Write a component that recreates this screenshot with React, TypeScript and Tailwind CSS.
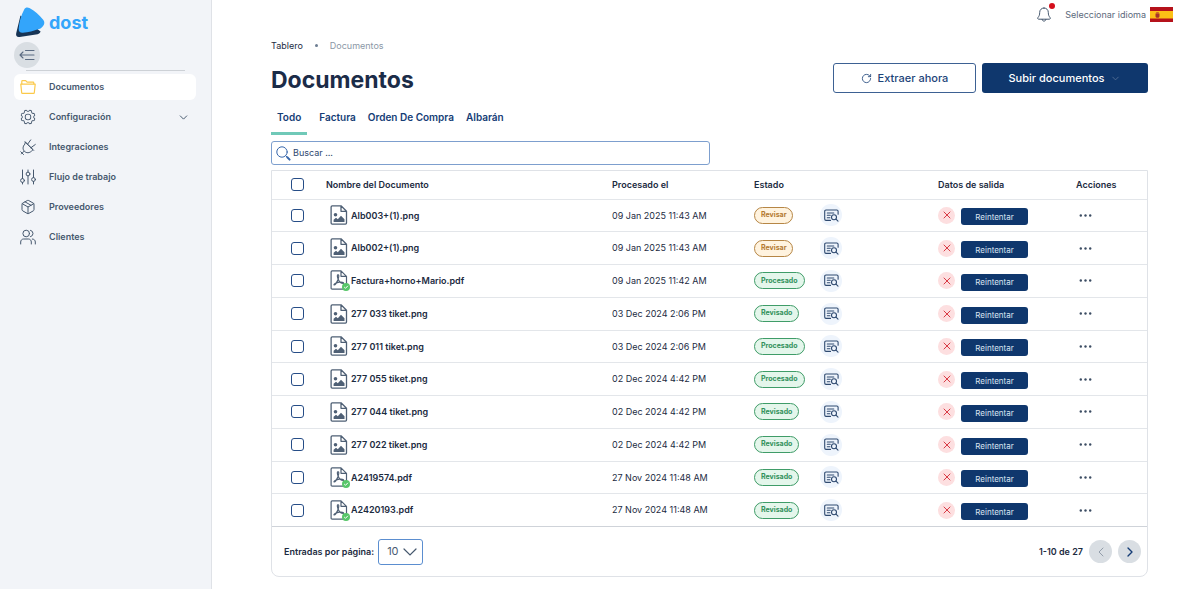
import React, { useState } from "react";
import { ChevronDown, ChevronLeft, ChevronRight, Package, RotateCw, X } from "lucide-react";
import { PiGearLight } from "react-icons/pi";

type Status = "Revisar" | "Procesado" | "Revisado";

interface DocumentRow {
  name: string;
  date: string;
  status: Status;
}

const documents: DocumentRow[] = [
  { name: "Alb003+(1).png", date: "09 Jan 2025 11:43 AM", status: "Revisar" },
  { name: "Alb002+(1).png", date: "09 Jan 2025 11:43 AM", status: "Revisar" },
  { name: "Factura+horno+Mario.pdf", date: "09 Jan 2025 11:42 AM", status: "Procesado" },
  { name: "277 033 tiket.png", date: "03 Dec 2024 2:06 PM", status: "Revisado" },
  { name: "277 011 tiket.png", date: "03 Dec 2024 2:06 PM", status: "Procesado" },
  { name: "277 055 tiket.png", date: "02 Dec 2024 4:42 PM", status: "Procesado" },
  { name: "277 044 tiket.png", date: "02 Dec 2024 4:42 PM", status: "Revisado" },
  { name: "277 022 tiket.png", date: "02 Dec 2024 4:42 PM", status: "Revisado" },
  { name: "A2419574.pdf", date: "27 Nov 2024 11:48 AM", status: "Revisado" },
  { name: "A2420193.pdf", date: "27 Nov 2024 11:48 AM", status: "Revisado" },
];

const tabs = ["Todo", "Factura", "Orden De Compra", "Albarán"];

const checkboxClass =
  "block w-[13px] h-[13px] ml-[19px] appearance-none rounded-[3px] border border-[#264d87] bg-white checked:bg-[#0f376d]";

/* Icons */

const FolderIcon = () => (
  <svg viewBox="0 0 16 16" className="w-4 h-4" fill="none" stroke="#fbc94a" strokeWidth="1.2" strokeLinejoin="round">
    <path d="M1.8 5.2V2.4c0-.4.3-.7.7-.7h3.2l1.4 1.5h6c.4 0 .7.3.7.7v1.3" />
    <path d="M.8 5.2h14.4l-.9 8.5c0 .4-.4.7-.8.7h-11c-.4 0-.8-.3-.8-.7z" />
  </svg>
);

const PlugIcon = () => (
  <svg viewBox="0 0 16 16" className="w-4 h-4" fill="none" stroke="currentColor" strokeWidth="1" strokeLinecap="round" strokeLinejoin="round">
    <path d="M5.6 3.3l7.4 7.4-1.5 1.4c-2 2-5 2.200-7 .3s-1.900-5 .1-7z" />
    <path d="M5 2.700l8.700 8.700M7.600 5.200L10.700.9M11 8.700l4.300-3.200M4.200 12.100L1.400 14.900M.8 12.800l2.700 2.700" />
  </svg>
);

const FlowIcon = () => (
  <svg viewBox="0 0 16 16" className="w-4 h-4" fill="none" stroke="currentColor" strokeWidth="1" strokeLinecap="round">
    <path d="M2.500 1v8.500M2.500 13.500V15M8 1v2M8 7v8M13.500 1v7.500M13.500 12.500V15" />
    <circle cx="2.500" cy="11.500" r="1.900" />
    <circle cx="8" cy="5" r="1.900" />
    <circle cx="13.500" cy="10.500" r="1.900" />
  </svg>
);

const ClientsIcon = () => (
  <svg viewBox="0 0 16 16" className="w-4 h-4" fill="none" stroke="currentColor" strokeWidth="1" strokeLinecap="round">
    <circle cx="6.200" cy="4.500" r="3.300" />
    <path d="M.7 15v-2c0-1.700 1.200-3 2.900-3h4.800c1.700 0 2.900 1.300 2.900 3v2M10.500 1.300a3.300 3.300 0 0 1 0 6.400M12.300 10c1.800 0 3 1.300 3 3v2" />
  </svg>
);

const Logo = () => (
  <svg viewBox="0 0 30 31" className="w-[30px] h-[31px]">
    <path d="M5.500 8.500L1.200 26.200c-.6 2.700.8 4.200 3.400 3.800l18-2.800c1.600-.3 2.300-1.200 3-2.600l-12-9z" fill="#173455" />
    <path d="M9.200 2.400c1.100-1.900 3.200-2.400 5.200-1.300 5.100 2.800 9.800 6.800 13.800 11.700 1.600 2 1.500 4.300-.1 6.100-1.200 1.400-2.500 2.600-4.200 3.200-5.200 2-10.500 3.200-16.100 3.700-2.700.2-4.300-1.500-4.100-4.100.5-6.700 2.100-13.200 5.500-19.300z" fill="#33a5fb" />
  </svg>
);

const CollapseIcon = () => (
  <svg viewBox="0 0 16 12" className="w-4 h-3" fill="none" stroke="#5b6b82" strokeWidth="1.100" strokeLinecap="round" strokeLinejoin="round">
    <path d="M6.500 1.500H15M1 6h14M6.500 10.500H15M4 3L1 6l3 3" />
  </svg>
);

const BellIcon = () => (
  <svg viewBox="0 0 14 15" className="w-[14px] h-[15px]" fill="none" stroke="#46586e" strokeWidth="1" strokeLinecap="round" strokeLinejoin="round">
    <path d="M7 1C4.400 1 2.700 2.900 2.700 5.400c0 2.600-.6 3.700-1.600 4.900-.8 1-.4 1.900.6 1.900h10.600c1 0 1.400-.9.6-1.900-1-1.200-1.600-2.300-1.600-4.900C11.300 2.900 9.600 1 7 1zM5.100 12.400c.2 1.100.9 1.700 1.900 1.700s1.700-.6 1.900-1.700" />
  </svg>
);

const SpainFlag = () => (
  <svg viewBox="0 0 23 15" className="w-[23px] h-[15px]">
    <rect width="23" height="15" fill="#b5121b" />
    <rect y="4" width="23" height="7.500" fill="#fcc016" />
    <path d="M5.500 6.500h4v2.700c0 1-.9 1.600-2 1.600s-2-.6-2-1.600z" fill="#a8332c" />
    <path d="M6.200 5.300h2.600v1.200H6.200z" fill="#b5432c" />
  </svg>
);

const SearchIcon = () => (
  <svg viewBox="0 0 15 15" className="w-[15px] h-[15px] shrink-0" fill="none" stroke="#3767ab" strokeLinecap="round">
    <circle cx="6" cy="6" r="5.200" strokeWidth="1" />
    <path d="M9.800 9.800l1.300 1.300" strokeWidth="1" />
    <path d="M11.300 11.300l2.300 2.300" strokeWidth="2" />
  </svg>
);

const ImageFileIcon = () => (
  <svg viewBox="0 0 18 20" className="w-[18px] h-5" fill="none" stroke="#4f6075" strokeWidth="1.300" strokeLinejoin="round">
    <path d="M2.200.8h8.800l5.500 5.500v11.800c0 .7-.5 1.100-1.100 1.100H2.200c-.7 0-1.100-.4-1.100-1.100V1.900C1.100 1.200 1.500.8 2.200.8zM11 .8v5.500h5.500" />
    <circle cx="5.500" cy="9.700" r="1.800" fill="#4f6075" stroke="none" />
    <path d="M3.600 17v-2.200L6 12.700l1.800 1.500 3.200-3.500 3.500 3.600V17z" fill="#4f6075" stroke="none" />
  </svg>
);

const PdfFileIcon = () => (
  <svg viewBox="0 0 20 21" className="w-5 h-[21px]" fill="none" stroke="#4f6075" strokeWidth="1.200" strokeLinejoin="round">
    <path d="M2.200.8h8.800l5.500 5.500v11.800c0 .7-.5 1.100-1.100 1.100H2.200c-.7 0-1.100-.4-1.100-1.100V1.900C1.100 1.200 1.500.8 2.200.8zM11 .8v5.500h5.500" />
    <path d="M7.800 4.700c-.9.300-.3 3 .4 4.600.9 2.100 2.800 4.300 5.200 4.200M8.500 4.900c.7 1-.1 3.600-.9 5.500-.9 2.100-2.100 4.200-3.500 4.600M4 14.700c1-1.500 3.400-2.300 5.500-2.500 2-.2 4.200.1 4.200 1.100" strokeWidth="1.200" strokeLinecap="round" />
    <circle cx="16" cy="17" r="4" fill="#58c66a" stroke="none" />
    <path d="M14.200 17l1.300 1.300 2.400-2.500" stroke="white" strokeWidth="1" />
  </svg>
);

const ReviewIcon = () => (
  <svg viewBox="0 0 15 13" className="w-[15px] h-[13px]" fill="none" stroke="#2f4a70" strokeWidth="1.100" strokeLinecap="round" strokeLinejoin="round">
    <path d="M6.500 11.400H2c-.8 0-1.300-.5-1.300-1.300V2.300C.7 1.500 1.200 1 2 1h10.800c.8 0 1.300.5 1.300 1.300v3M3.300 4h6.500M3.300 6.300h3M3.300 8.700h2.600" />
    <circle cx="10" cy="8.200" r="2.500" />
    <path d="M12 10.200l2 2" />
  </svg>
);

const DotsIcon = () => (
  <svg viewBox="0 0 13 3" className="w-[13px] h-[3px]" fill="#3c4d63">
    <circle cx="1.800" cy="1.500" r="1.200" />
    <circle cx="6.500" cy="1.500" r="1.200" />
    <circle cx="11.200" cy="1.500" r="1.200" />
  </svg>
);

/* Sidebar */

const navItems = [
  { label: "Documentos", icon: <FolderIcon />, active: true },
  { label: "Configuración", icon: <PiGearLight size={18} className="-ml-px" />, expandable: true },
  { label: "Integraciones", icon: <PlugIcon /> },
  { label: "Flujo de trabajo", icon: <FlowIcon /> },
  { label: "Proveedores", icon: <Package size={16} strokeWidth={1.5} /> },
  { label: "Clientes", icon: <ClientsIcon /> },
];

const Sidebar = () => (
  <aside className="w-[212px] shrink-0 border-r border-[#dfe2e7] bg-[#f2f4f8] px-[14px] pt-[7px]">
    <a href="#" className="flex items-center gap-1 pl-px">
      <Logo />
      <span className="text-lg leading-6 font-bold text-[#33a5fb]">dost</span>
    </a>
    <button
      aria-label="Contraer menú"
      className="mt-1 flex w-[26px] h-[26px] items-center justify-center rounded-full bg-[#d9dee3]"
    >
      <CollapseIcon />
    </button>
    <hr className="mt-[2px] mb-[3px] mx-3 border-[#cdd1d6]" />
    <nav className="flex flex-col gap-1">
      {navItems.map((item) => (
        <a
          key={item.label}
          href="#"
          className={`flex h-[26px] items-center rounded-md px-1.5 text-[9px] font-semibold text-[#46586e] mr-px ${
            item.active ? "bg-white" : ""
          }`}
        >
          <span className="w-[29px]">{item.icon}</span>
          {item.label}
          {item.expandable && <ChevronDown size={13} strokeWidth={1.8} className="ml-auto" />}
        </a>
      ))}
    </nav>
  </aside>
);

const StatusBadge = ({ status }: { status: Status }) => (
  <span
    className={`inline-flex h-[17px] items-center rounded-full border px-1.5 text-[7px] font-bold ${
      status === "Revisar"
        ? "border-[#b68645] bg-[#fff3df] text-[#b47a31]"
        : "border-[#3f9c68] bg-[#e4f6eb] text-[#32915b]"
    }`}
  >
    {status}
  </span>
);

export default function App() {
  const [activeTab, setActiveTab] = useState("Todo");
  const [pageSize, setPageSize] = useState("10");

  return (
    <div className="flex min-h-screen bg-white font-['Inter',sans-serif] text-[#1c2b3f]">
      <Sidebar />

      <div className="min-w-0 flex-1">
        {/* Top bar */}
        <header className="flex h-[29px] items-center justify-end pr-[27px]">
          <button aria-label="Notificaciones" className="relative mr-[14px]">
            <BellIcon />
            <span className="absolute -top-1 -right-1 w-1.5 h-1.5 rounded-full bg-[#d40f1c]" />
          </button>
          <button className="flex items-center gap-1 text-[9px] text-[#5b697b]">
            Seleccionar idioma
            <SpainFlag />
          </button>
        </header>

        <main className="pl-[59px] pr-[52px] pb-3">
          <nav aria-label="Ruta" className="flex h-[33px] items-center gap-3 text-[9px]">
            <a href="#">Tablero</a>
            <span className="w-[3px] h-[3px] rounded-full bg-[#6c7d92]" />
            <span className="text-[#8b97a6]">Documentos</span>
          </nav>

          <div className="flex items-center justify-between mb-3">
            <h1 className="pt-1 text-[23px] leading-7 font-bold text-[#1b2c48]">Documentos</h1>
            <div className="flex gap-1.5 text-[11px] font-medium">
              <button className="flex w-[143px] h-[30px] items-center justify-center gap-1.5 rounded-[3px] border border-[#3d6193] text-[#1d4479]">
                <RotateCw size={11} strokeWidth={1.8} />
                Extraer ahora
              </button>
              <button className="flex w-[166px] h-[30px] items-center justify-center gap-1.5 rounded-[3px] bg-[#0f376d] text-white">
                Subir documentos
                <ChevronDown size={11} strokeWidth={1.8} className="text-[#5a7398]" />
              </button>
            </div>
          </div>

          {/* Tabs */}
          <div role="tablist" className="flex gap-3">
            {tabs.map((tab, i) => (
              <button
                key={tab}
                role="tab"
                aria-selected={tab === activeTab}
                onClick={() => setActiveTab(tab)}
                className={`h-[29px] border-b-[3px] pb-1 text-[10px] font-semibold text-[#153d76] ${
                  i === 0 ? "px-1.5" : ""
                } ${tab === activeTab ? "border-[#70c9b8]" : "border-transparent"}`}
              >
                {tab}
              </button>
            ))}
          </div>

          {/* Search */}
          <label className="mt-1.5 flex w-1/2 h-6 items-center gap-0.5 rounded-[3px] border border-[#7d9fce] px-1">
            <SearchIcon />
            <input
              type="text"
              aria-label="Buscar"
              placeholder="Buscar ..."
              className="w-full bg-transparent text-[9px] outline-none placeholder:text-[#2d486f]"
            />
          </label>

          {/* Documents */}
          <section className="mt-[5px] rounded-b-lg border border-[#dfe2e7]">
            <table className="w-full h-[356px] table-fixed border-collapse text-left text-[9px]">
              <thead>
                <tr className="border-b border-[#e3e6ea]">
                  <th className="w-[54px] h-7">
                    <input type="checkbox" aria-label="Seleccionar todo" className={checkboxClass} />
                  </th>
                  <th className="font-semibold">Nombre del Documento</th>
                  <th className="w-[142px] font-semibold">Procesado el</th>
                  <th className="w-[66px] font-semibold">Estado</th>
                  <th className="w-[118px]" />
                  <th className="w-[138px] font-semibold">Datos de salida</th>
                  <th className="w-[71px] font-semibold">Acciones</th>
                </tr>
              </thead>
              <tbody>
                {documents.map((doc) => (
                  <tr key={doc.name} className="border-b border-[#e3e6ea] last:border-[#cfd3d9]">
                    <td>
                      <input type="checkbox" aria-label={`Seleccionar ${doc.name}`} className={checkboxClass} />
                    </td>
                    <td>
                      <div className="flex items-center pl-1 font-semibold">
                        <span className="w-[21px]">
                          {doc.name.endsWith(".pdf") ? <PdfFileIcon /> : <ImageFileIcon />}
                        </span>
                        {doc.name}
                      </div>
                    </td>
                    <td>{doc.date}</td>
                    <td>
                      <StatusBadge status={doc.status} />
                    </td>
                    <td>
                      <button
                        aria-label={`Ver ${doc.name}`}
                        className="flex w-[22px] h-[22px] items-center justify-center rounded-full bg-[#eef4fc]"
                      >
                        <ReviewIcon />
                      </button>
                    </td>
                    <td>
                      <div className="flex items-center gap-1.5">
                        <span className="flex w-[17px] h-[17px] items-center justify-center rounded-full bg-[#fddfe0] text-[#d93b45]">
                          <X size={12} strokeWidth={2} />
                        </span>
                        <button className="mt-[3px] w-[67px] h-[17px] rounded-[3px] bg-[#0f376d] text-[8px] leading-3 text-[#dbe5f2]">
                          Reintentar
                        </button>
                      </div>
                    </td>
                    <td>
                      <button aria-label={`Acciones de ${doc.name}`} className="flex h-4 items-center pl-[3px]">
                        <DotsIcon />
                      </button>
                    </td>
                  </tr>
                ))}
              </tbody>
            </table>

            <footer className="flex h-[49px] items-center justify-between pl-3 pr-1.5 text-[9px] font-semibold">
              <div className="flex items-center gap-1">
                <label htmlFor="page-size">Entradas por página:</label>
                <div className="relative">
                  <select
                    id="page-size"
                    value={pageSize}
                    onChange={(e) => setPageSize(e.target.value)}
                    className="w-[45px] h-[26px] appearance-none rounded-[3px] border border-[#5b8ed0] bg-white pl-2 text-[11px] font-normal text-[#4a5b72]"
                  >
                    <option>10</option>
                    <option>25</option>
                    <option>50</option>
                  </select>
                  <svg
                    viewBox="0 0 14 8"
                    className="pointer-events-none absolute top-[9px] right-1.5 w-[14px] h-2"
                    fill="none"
                    stroke="#46586e"
                    strokeWidth="1.200"
                    strokeLinecap="round"
                  >
                    <path d="M1 1l6 6 6-6" />
                  </svg>
                </div>
              </div>
              <div className="flex items-center gap-1.5">
                <span>1-10 de 27</span>
                <button
                  aria-label="Página anterior"
                  className="flex w-[23px] h-[23px] items-center justify-center rounded-full bg-[#d9dee3] text-[#929daa]"
                >
                  <ChevronLeft size={16} strokeWidth={1.5} />
                </button>
                <button
                  aria-label="Página siguiente"
                  className="flex w-[23px] h-[23px] items-center justify-center rounded-full bg-[#d9dee3] text-[#153d76]"
                >
                  <ChevronRight size={16} strokeWidth={2} />
                </button>
              </div>
            </footer>
          </section>
        </main>
      </div>
    </div>
  );
}
